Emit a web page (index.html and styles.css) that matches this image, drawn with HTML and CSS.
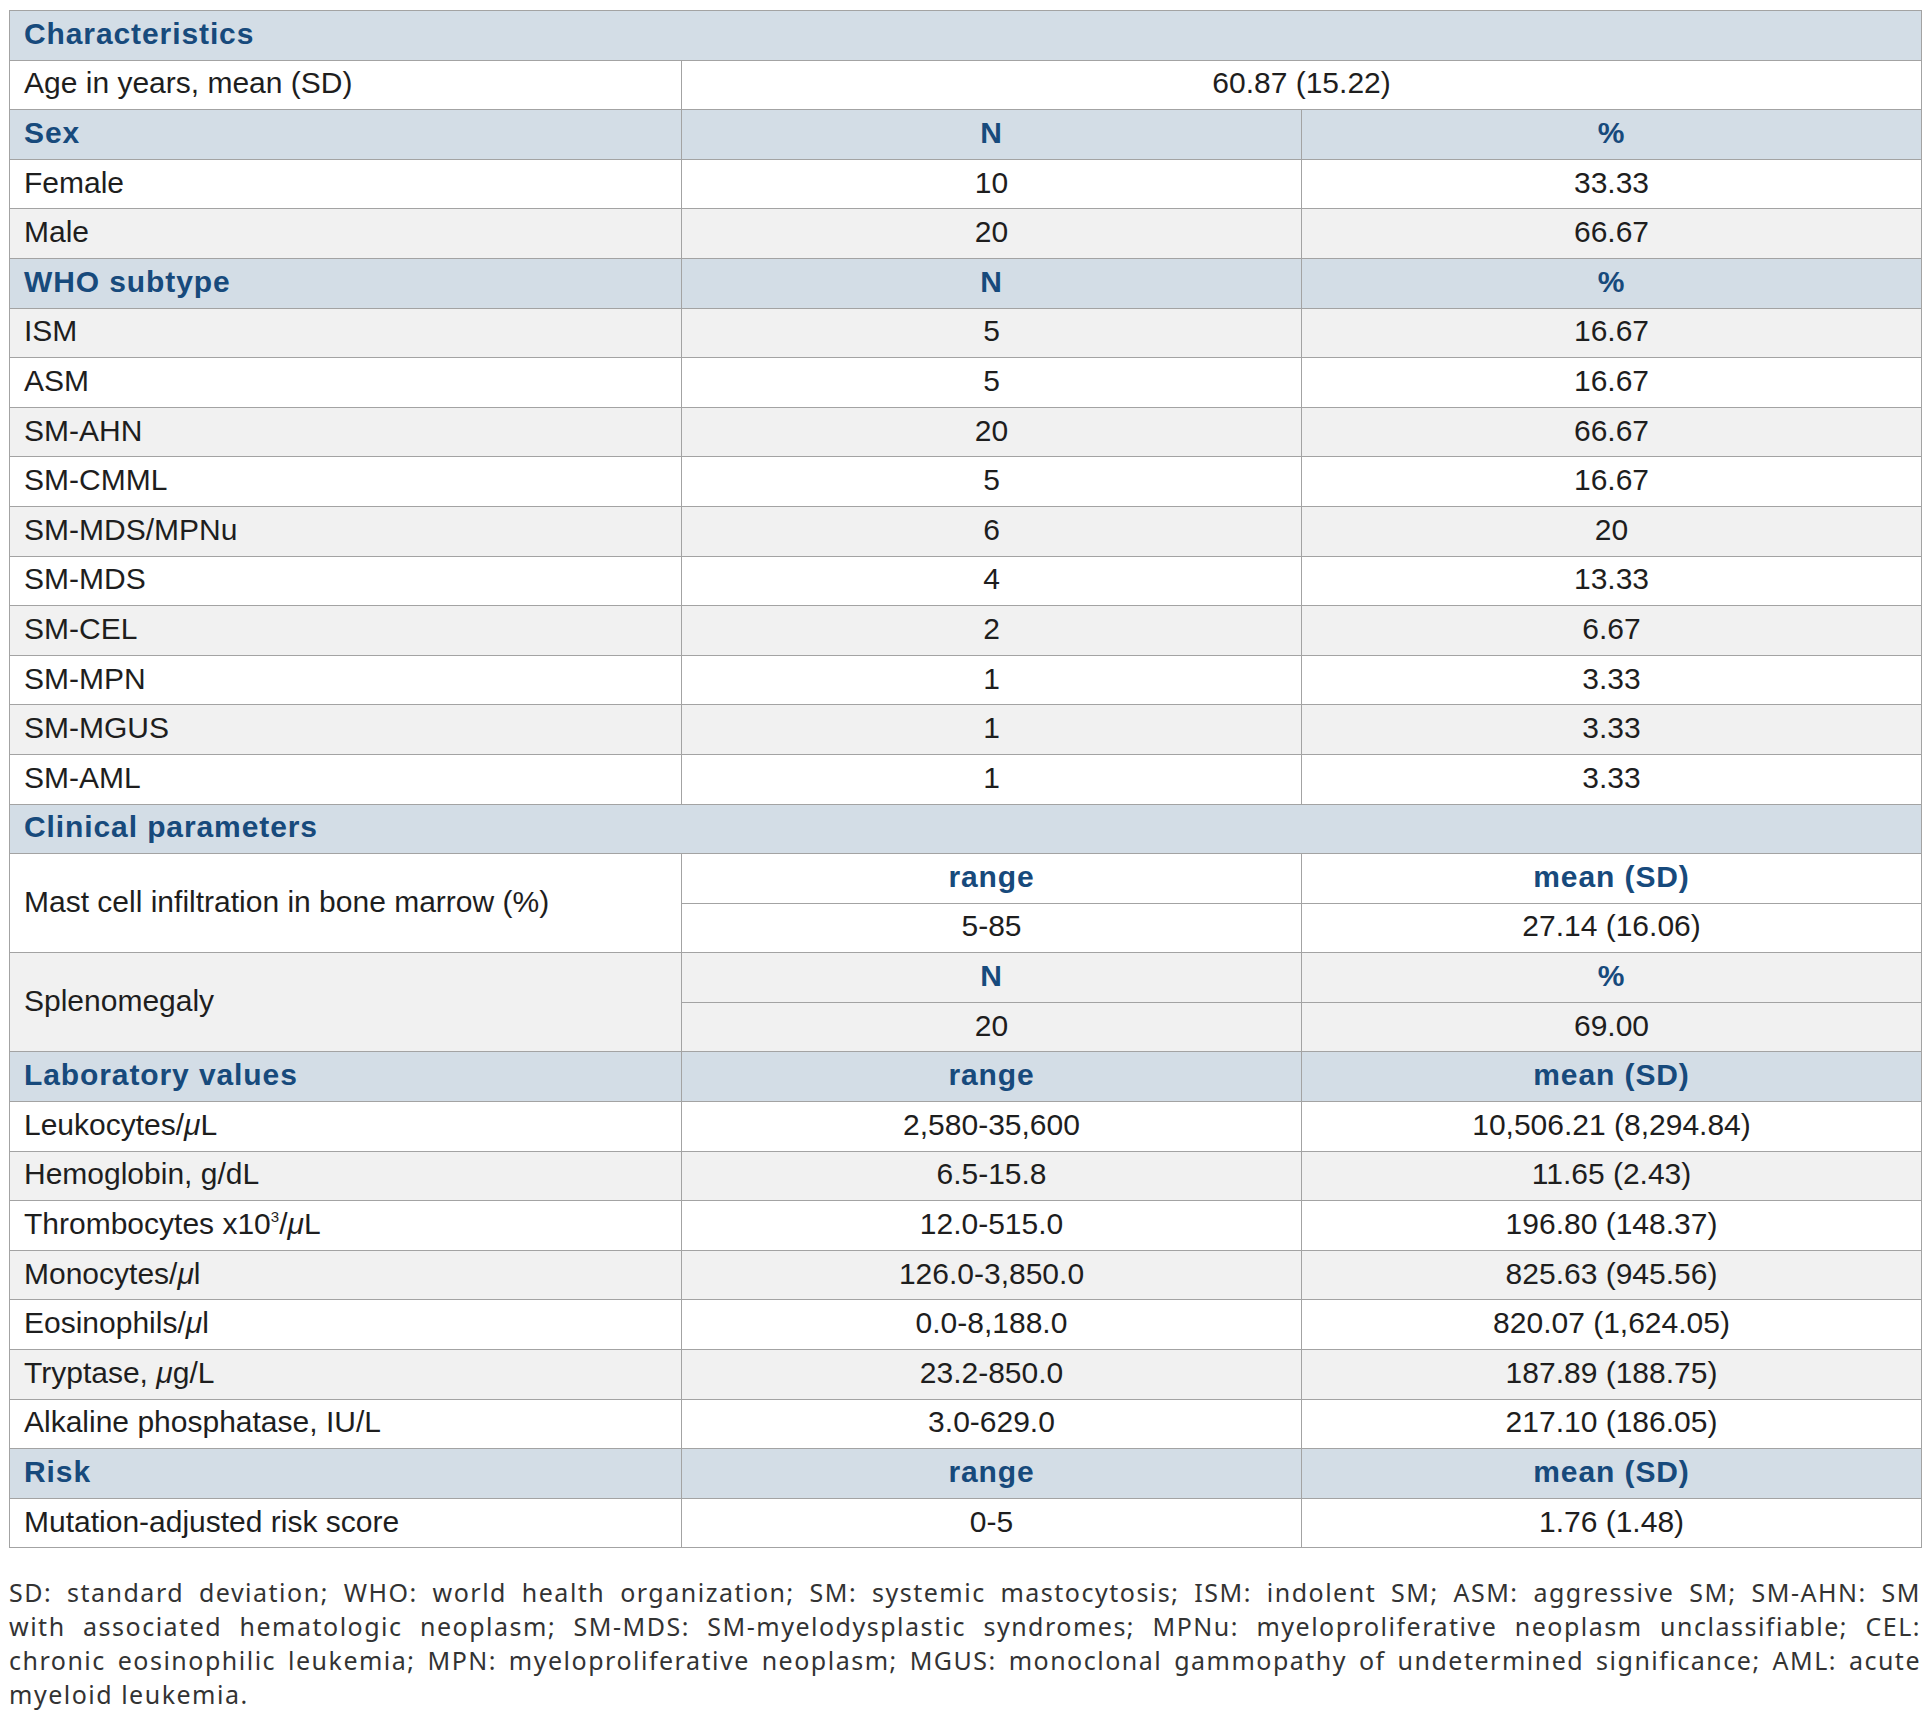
FILE: index.html
```html
<!DOCTYPE html>
<html lang="en">
<head>
<meta charset="utf-8">
<title>Patient characteristics</title>
<link rel="stylesheet" href="styles.css">
</head>
<body>
<div class="page">
<table class="tbl">
<colgroup><col class="c1"><col class="c2"><col class="c3"></colgroup>
<tbody>
<tr class="hd"><td colspan="3">Characteristics</td></tr>
<tr><td>Age in years, mean (SD)</td><td colspan="2" class="num">60.87 (15.22)</td></tr>
<tr class="hd"><td>Sex</td><td class="num">N</td><td class="num">%</td></tr>
<tr><td>Female</td><td class="num">10</td><td class="num">33.33</td></tr>
<tr class="alt"><td>Male</td><td class="num">20</td><td class="num">66.67</td></tr>
<tr class="hd"><td>WHO subtype</td><td class="num">N</td><td class="num">%</td></tr>
<tr class="alt"><td>ISM</td><td class="num">5</td><td class="num">16.67</td></tr>
<tr><td>ASM</td><td class="num">5</td><td class="num">16.67</td></tr>
<tr class="alt"><td>SM-AHN</td><td class="num">20</td><td class="num">66.67</td></tr>
<tr><td>SM-CMML</td><td class="num">5</td><td class="num">16.67</td></tr>
<tr class="alt"><td>SM-MDS/MPNu</td><td class="num">6</td><td class="num">20</td></tr>
<tr><td>SM-MDS</td><td class="num">4</td><td class="num">13.33</td></tr>
<tr class="alt"><td>SM-CEL</td><td class="num">2</td><td class="num">6.67</td></tr>
<tr><td>SM-MPN</td><td class="num">1</td><td class="num">3.33</td></tr>
<tr class="alt"><td>SM-MGUS</td><td class="num">1</td><td class="num">3.33</td></tr>
<tr><td>SM-AML</td><td class="num">1</td><td class="num">3.33</td></tr>
<tr class="hd"><td colspan="3">Clinical parameters</td></tr>
<tr><td rowspan="2">Mast cell infiltration in bone marrow (%)</td><td class="num sub">range</td><td class="num sub">mean (SD)</td></tr>
<tr><td class="num">5-85</td><td class="num">27.14 (16.06)</td></tr>
<tr class="alt"><td rowspan="2">Splenomegaly</td><td class="num sub">N</td><td class="num sub">%</td></tr>
<tr class="alt"><td class="num">20</td><td class="num">69.00</td></tr>
<tr class="hd"><td>Laboratory values</td><td class="num">range</td><td class="num">mean (SD)</td></tr>
<tr><td>Leukocytes/<i>μ</i>L</td><td class="num">2,580-35,600</td><td class="num">10,506.21 (8,294.84)</td></tr>
<tr class="alt"><td>Hemoglobin, g/dL</td><td class="num">6.5-15.8</td><td class="num">11.65 (2.43)</td></tr>
<tr><td>Thrombocytes x10<sup>3</sup>/<i>μ</i>L</td><td class="num">12.0-515.0</td><td class="num">196.80 (148.37)</td></tr>
<tr class="alt"><td>Monocytes/<i>μ</i>l</td><td class="num">126.0-3,850.0</td><td class="num">825.63 (945.56)</td></tr>
<tr><td>Eosinophils/<i>μ</i>l</td><td class="num">0.0-8,188.0</td><td class="num">820.07 (1,624.05)</td></tr>
<tr class="alt"><td>Tryptase, <i>μ</i>g/L</td><td class="num">23.2-850.0</td><td class="num">187.89 (188.75)</td></tr>
<tr><td>Alkaline phosphatase, IU/L</td><td class="num">3.0-629.0</td><td class="num">217.10 (186.05)</td></tr>
<tr class="hd"><td>Risk</td><td class="num">range</td><td class="num">mean (SD)</td></tr>
<tr><td>Mutation-adjusted risk score</td><td class="num">0-5</td><td class="num">1.76 (1.48)</td></tr>
</tbody>
</table>
<div class="note">
<div class="ln">SD: standard deviation; WHO: world health organization; SM: systemic mastocytosis; ISM: indolent SM; ASM: aggressive SM; SM-AHN: SM</div>
<div class="ln">with associated hematologic neoplasm; SM-MDS: SM-myelodysplastic syndromes; MPNu: myeloproliferative neoplasm unclassifiable; CEL:</div>
<div class="ln">chronic eosinophilic leukemia; MPN: myeloproliferative neoplasm; MGUS: monoclonal gammopathy of undetermined significance; AML: acute</div>
<div class="ln last">myeloid leukemia.</div>
</div>
</div>
</body>
</html>
```
FILE: styles.css
```css
html, body {
  margin: 0;
  padding: 0;
  background: #ffffff;
}
.page {
  width: 1912px;
  padding: 10px 7px 0 9px;
}
.tbl {
  width: 1912px;
  border-collapse: collapse;
  table-layout: fixed;
  font-family: "Liberation Sans", Arial, sans-serif;
  font-size: 30px;
  color: #1e1e1e;
}
.c1 { width: 672px; }
.c2 { width: 620px; }
.c3 { width: 620px; }
.tbl tr { height: 49.6px; }
.tbl td {
  border: 1px solid #a3a3a3;
  padding: 0 14px 3px 14px;
  vertical-align: middle;
  white-space: nowrap;
  line-height: 34px;
}
.tbl td.num { text-align: center; padding-left: 0; padding-right: 0; }
.tbl tr.alt td { background: #f1f1f1; }
.tbl tr.hd td {
  background: #d3dde6;
  color: #174a7c;
  font-weight: bold;
  letter-spacing: 0.9px;
}
.tbl td.sub {
  color: #174a7c;
  font-weight: bold;
  letter-spacing: 0.9px;
}
.tbl i { font-style: italic; }
.tbl sup {
  font-size: 15px;
  line-height: 0;
  vertical-align: 12px;
}
.note {
  margin-top: 28px;
  font-family: "Noto Sans", sans-serif;
  font-size: 25px;
  line-height: 33.8px;
  color: #333333;
  letter-spacing: 1.5px;
}
.ln {
  text-align: justify;
  text-align-last: justify;
  white-space: nowrap;
}
.ln.last { text-align-last: left; }
```
